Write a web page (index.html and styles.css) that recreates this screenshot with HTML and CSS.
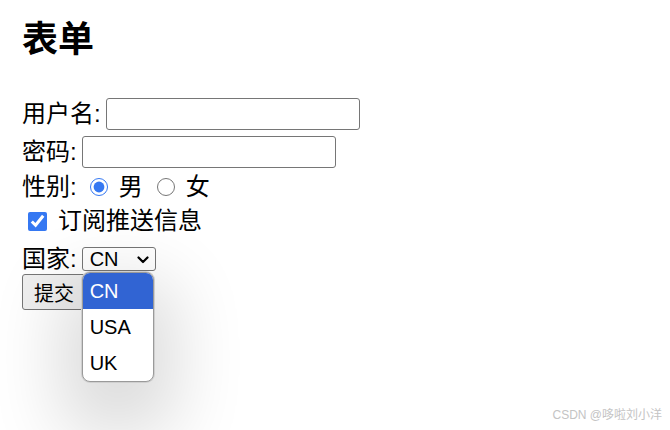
FILE: index.html
```html
<!doctype html>
<html lang="zh">
<head>
    <meta charset="UTF-8">
    <title>表单</title>
    <link rel="stylesheet" href="styles.css">
</head>
<body>
<div class="page">
    <h1 class="title">表单</h1>
    <form class="form">
        <div class="row row-user">
            <label>用户名:</label>
            <input type="text" class="text-input">
        </div>
        <div class="row row-pass">
            <label>密码:</label>
            <input type="password" class="text-input">
        </div>
        <div class="row row-sex">
            <label>性别:</label>
            <input type="radio" name="sex" class="radio" checked>
            <span class="opt">男</span>
            <input type="radio" name="sex" class="radio">
            <span class="opt">女</span>
        </div>
        <div class="row row-sub">
            <input type="checkbox" class="check" checked>
            <span class="opt">订阅推送信息</span>
        </div>
        <div class="row row-country">
            <label>国家:</label>
            <div class="select-wrap">
                <select class="select">
                    <option>CN</option>
                    <option>USA</option>
                    <option>UK</option>
                </select>
                <svg class="chevron" width="12" height="8" viewBox="0 0 12 8">
                    <path d="M1.5 1.5 L6 6 L10.5 1.5" fill="none" stroke="#000" stroke-width="2.2" stroke-linecap="round" stroke-linejoin="round"/>
                </svg>
                <ul class="dropdown">
                    <li class="active">CN</li>
                    <li>USA</li>
                    <li>UK</li>
                </ul>
            </div>
        </div>
        <div class="row row-btn">
            <button type="button" class="btn">提交</button>
        </div>
    </form>
</div>
<div class="mark">CSDN @哆啦刘小洋</div>
</body>
</html>
```

FILE: styles.css
```css
*{
    padding: 0;
    margin: 0;
    box-sizing: border-box;
}
html, body{
    height: 100%;
}
body{
    background-color: #ffffff;
    color: #000000;
    font-family: "Liberation Sans", "Noto Sans CJK SC", sans-serif;
    font-size: 24px;
    position: relative;
}
.page{
    padding: 20px 22px 0;
    min-height: 430px;
}
.title{
    font-size: 36px;
    font-weight: bold;
    line-height: 40px;
    height: 40px;
    margin-bottom: 35px;
}
.row{
    display: flex;
    align-items: center;
}
.row label{
    line-height: 1;
}
.row-user,
.row-pass{
    height: 38px;
}
.row-sex{
    height: 31px;
}
.row-sub{
    height: 38px;
}
.row-country{
    height: 34px;
    padding-top: 4px;
}
.text-input{
    margin-left: 5px;
    width: 254px;
    height: 32px;
    border: 1px solid #767676;
    border-radius: 3px;
    font-size: 20px;
    padding: 0 4px;
    background: #fff;
}
.radio{
    width: 18px;
    height: 18px;
    margin: 0 11px 0 13px;
    accent-color: #3578f2;
}
.row-sex .opt + .radio{
    margin-left: 14px;
}
.check{
    width: 19px;
    height: 19px;
    margin: 0 11px 0 6px;
    accent-color: #3578f2;
}
.opt{
    line-height: 1;
}
.select-wrap{
    position: relative;
    margin-left: 5px;
}
.select{
    display: block;
    appearance: none;
    width: 74px;
    height: 24px;
    font-family: "Liberation Sans", sans-serif;
    font-size: 20px;
    border: 1px solid #767676;
    border-radius: 3px;
    background: #fff;
    color: #000;
    padding: 0 0 0 7px;
}
.chevron{
    position: absolute;
    right: 7px;
    top: 9px;
}
.dropdown{
    position: absolute;
    left: 0;
    top: 25px;
    width: 72px;
    list-style: none;
    background: #fff;
    border: 1px solid #9a9a9a;
    border-radius: 8px;
    overflow: hidden;
    box-shadow: 0 0 0 1px #cfcfcf, 0 30px 70px 22px rgba(0, 0, 0, 0.14);
    font-family: "Liberation Sans", sans-serif;
    font-size: 20px;
    z-index: 2;
}
.dropdown li{
    height: 36px;
    line-height: 36px;
    padding-left: 7px;
}
.dropdown .active{
    background-color: #3164d3;
    color: #ffffff;
}
.row-btn{
    height: 36px;
}
.btn{
    width: 64px;
    height: 36px;
    font-family: "Noto Sans CJK SC", sans-serif;
    font-size: 20px;
    border: 1px solid #767676;
    border-radius: 3px;
    background: #efefef;
    color: #000;
}
.mark{
    position: absolute;
    right: 8px;
    bottom: 8px;
    font-size: 12px;
    color: #c4c4c4;
    font-family: "Liberation Sans", "Noto Sans CJK SC", sans-serif;
}
```
